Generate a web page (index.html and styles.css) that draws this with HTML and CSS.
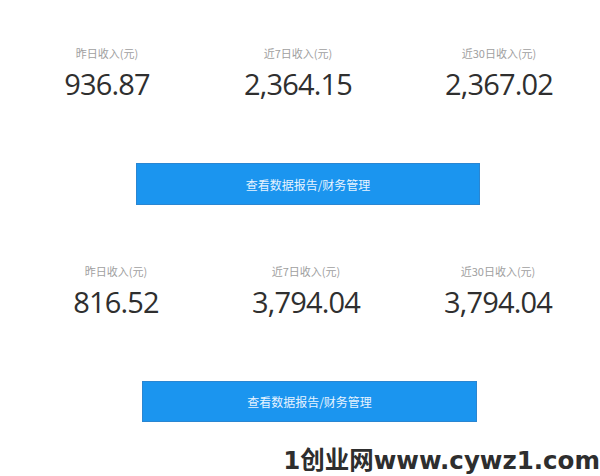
FILE: index.html
```html
<!DOCTYPE html>
<html lang="zh-CN">
<head>
<meta charset="utf-8">
<title>收入</title>
<link rel="stylesheet" href="styles.css">
</head>
<body>
<div class="page">
  <section class="stats stats-top">
    <div class="stat">
      <div class="label">昨日收入(元)</div>
      <div class="value">936.87</div>
    </div>
    <div class="stat">
      <div class="label">近7日收入(元)</div>
      <div class="value">2,364.15</div>
    </div>
    <div class="stat">
      <div class="label">近30日收入(元)</div>
      <div class="value">2,367.02</div>
    </div>
  </section>
  <div class="btn btn-top">查看数据报告/财务管理</div>

  <section class="stats stats-bottom">
    <div class="stat">
      <div class="label">昨日收入(元)</div>
      <div class="value">816.52</div>
    </div>
    <div class="stat">
      <div class="label">近7日收入(元)</div>
      <div class="value">3,794.04</div>
    </div>
    <div class="stat">
      <div class="label">近30日收入(元)</div>
      <div class="value">3,794.04</div>
    </div>
  </section>
  <div class="btn btn-bottom">查看数据报告/财务管理</div>

  <div class="watermark">1创业网www.cywz1.com</div>
</div>
</body>
</html>
```
FILE: styles.css
```css
html, body {
  margin: 0;
  padding: 0;
  background: #ffffff;
}
.page {
  position: relative;
  width: 600px;
  height: 476px;
  overflow: hidden;
  font-family: "Noto Sans", "Noto Sans CJK SC", sans-serif;
}
.stats {
  display: grid;
}
.stats-top {
  padding-top: 45px;
  padding-left: 17px;
  grid-template-columns: 180px 202px 200px;
}
.stats-bottom {
  padding-top: 58px;
  padding-left: 26px;
  grid-template-columns: 180px 200px 184px;
}
.stat {
  display: flex;
  flex-direction: column;
  align-items: center;
  gap: 7px;
}
.label {
  font-family: "Noto Sans CJK SC", sans-serif;
  font-size: 11px;
  line-height: 16px;
  color: #a0a0a0;
}
.value {
  font-family: "Open Sans", sans-serif;
  font-size: 29px;
  line-height: 32px;
  letter-spacing: -0.8px;
  color: #2f2f2f;
}
.btn {
  box-sizing: border-box;
  display: flex;
  align-items: center;
  justify-content: center;
  background: #1b95ef;
  border: 1px solid #2a86d2;
  color: #e6f3ff;
  font-family: "Noto Sans CJK SC", sans-serif;
  font-size: 12px;
}
.btn-top {
  margin-top: 63px;
  margin-left: 136px;
  width: 344px;
  height: 42px;
}
.btn-bottom {
  margin-top: 63px;
  margin-left: 142px;
  width: 335px;
  height: 41px;
}
.watermark {
  position: absolute;
  right: 0;
  bottom: 0;
  font-family: "DejaVu Sans", "Noto Sans CJK SC", sans-serif;
  font-weight: bold;
  font-size: 24.5px;
  line-height: 30px;
  color: #2e2e2e;
  white-space: nowrap;
}
```
